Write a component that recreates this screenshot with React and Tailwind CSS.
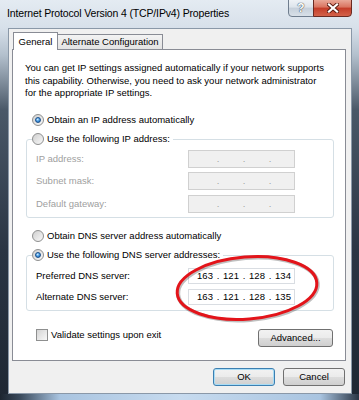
import React from "react";

function Radio({ checked }) {
  return (
    <span className="w-[12px] h-[12px] rounded-full border border-[#8e8f8f] bg-[linear-gradient(135deg,#cfcfcf,#f8f8f8)] flex items-center justify-center shrink-0">
      {checked && (
        <span className="w-[6px] h-[6px] rounded-full border border-[#1b4f8a] bg-[radial-gradient(circle_at_40%_35%,#d6eeff_0%,#4aa0e8_45%,#1e5ea8_100%)]" />
      )}
    </span>
  );
}

function IpBox({ values, disabled, h }) {
  const v = values || ["", "", "", ""];
  return (
    <div
      className={
        "w-[107px] flex items-center pl-[6px] border " +
        h +
        " " +
        (disabled
          ? "bg-[#f0f0f0] border-[#d0d0d0] text-[#a0a0a0]"
          : "bg-white border-[#d9dde2] text-black")
      }
    >
      <span className="w-[20px] text-center">{v[0]}</span>
      <span className="w-[6px] text-center">.</span>
      <span className="w-[20px] text-center">{v[1]}</span>
      <span className="w-[6px] text-center">.</span>
      <span className="w-[20px] text-center">{v[2]}</span>
      <span className="w-[6px] text-center">.</span>
      <span className="w-[20px] text-center">{v[3]}</span>
    </div>
  );
}

const btn =
  "h-[18px] w-[62px] rounded-[3px] border flex items-center justify-center text-black bg-[linear-gradient(to_bottom,#f2f2f2_0%,#ebebeb_50%,#dddddd_50%,#cfcfcf_100%)]";

export default function App() {
  return (
    <div className="relative w-[359px] h-[400px] overflow-hidden font-['Liberation_Sans',Arial,sans-serif] text-[9.5px] leading-[12px] text-black bg-[linear-gradient(to_bottom,#e4ebf2_0px,#d7e0ea_28px,#b3c0cd_55px,#4a5868_110px,#2a3544_250px,#1e2733_400px)] flex flex-col">
      {/* title bar */}
      <div className="h-[28px] flex items-start justify-between pl-[7px] pr-[7px] shrink-0">
        <div className="mt-[6px] text-[10.5px] tracking-[-0.15px] leading-[14px] text-black">
          Internet Protocol Version 4 (TCP/IPv4) Properties
        </div>
        <div className="flex -mt-px">
          <div className="w-[26px] h-[18px] rounded-bl-[4px] border border-[#6f7d8e] bg-[linear-gradient(to_bottom,#eef2f6_0%,#dde4eb_45%,#c5cfda_50%,#d8e0e8_100%)] flex items-center justify-center text-[12px] font-bold text-white [text-shadow:0_0_1px_#2c3845,0_0_1px_#2c3845]">
            ?
          </div>
          <div className="w-[39px] h-[18px] -ml-px rounded-br-[4px] border border-[#6a2a22] bg-[linear-gradient(to_bottom,#e9a898_0%,#d9735f_45%,#c43c28_50%,#d3624a_100%)] flex items-center justify-center">
            <svg width="12" height="10" viewBox="0 0 12 10">
              <path d="M2 1.5 L10 8.5 M10 1.5 L2 8.5" stroke="#5a1c12" strokeWidth="4" strokeLinecap="square" />
              <path d="M2 1.5 L10 8.5 M10 1.5 L2 8.5" stroke="#ffffff" strokeWidth="2.2" strokeLinecap="square" />
            </svg>
          </div>
        </div>
      </div>

      {/* client area */}
      <div className="flex-1 ml-[8px] mr-[7px] border border-[#8a98a8] bg-[#f0f0f0] flex flex-col pt-[3px] pl-[3px] pr-[5px]">
        {/* tabs */}
        <div className="flex items-end h-[18px] -mb-px shrink-0">
          <div className="relative z-10 ml-[1px] w-[45px] h-[18px] border border-b-0 border-[#898c95] bg-white flex items-center justify-center">
            General
          </div>
          <div className="-ml-px w-[106px] h-[16px] border border-[#898c95] bg-[linear-gradient(to_bottom,#f3f3f3,#e3e3e3)] flex items-center justify-center">
            Alternate Configuration
          </div>
        </div>

        {/* panel */}
        <div className="flex-1 border border-[#898c95] bg-white pt-[12px] pl-[12px] pr-[11px] flex flex-col">
          <p className="leading-[12.5px] whitespace-nowrap">
            You can get IP settings assigned automatically if your network supports
            <br />
            this capability. Otherwise, you need to ask your network administrator
            <br />
            for the appropriate IP settings.
          </p>

          <div className="mt-[14px] ml-[7px] h-[13px] flex items-center gap-[3px]">
            <Radio checked />
            <span>Obtain an IP address automatically</span>
          </div>

          <div className="mt-[12px] ml-[1px] border border-[#d5dfe5] rounded-[3px]">
            <div className="-mt-[7px] ml-[5px] pr-[3px] h-[13px] w-fit bg-white flex items-center gap-[3px]">
              <Radio />
              <span>Use the following IP address:</span>
            </div>
            <div className="mt-[4px] pb-[4px] pl-[9px] flex flex-col gap-[4.5px] text-[#a0a0a0]">
              <div className="flex items-center h-[18px]">
                <span className="w-[152px]">IP address:</span>
                <IpBox disabled h="h-[18px]" />
              </div>
              <div className="flex items-center h-[18px]">
                <span className="w-[152px]">Subnet mask:</span>
                <IpBox disabled h="h-[18px]" />
              </div>
              <div className="flex items-center h-[18px]">
                <span className="w-[152px]">Default gateway:</span>
                <IpBox disabled h="h-[18px]" />
              </div>
            </div>
          </div>

          <div className="mt-[12px] ml-[7px] h-[13px] flex items-center gap-[3px]">
            <Radio />
            <span>Obtain DNS server address automatically</span>
          </div>

          <div className="mt-[12px] ml-[1px] border border-[#d5dfe5] rounded-[3px]">
            <div className="-mt-[7px] ml-[5px] pr-[3px] h-[13px] w-fit bg-white flex items-center gap-[3px]">
              <Radio checked />
              <span>Use the following DNS server addresses:</span>
            </div>
            <div className="mt-[6px] pb-[5px] pl-[9px] flex flex-col gap-[5px]">
              <div className="flex items-center h-[16px]">
                <span className="w-[152px]">Preferred DNS server:</span>
                <IpBox values={["163", "121", "128", "134"]} h="h-[16px]" />
              </div>
              <div className="flex items-center h-[16px]">
                <span className="w-[152px]">Alternate DNS server:</span>
                <IpBox values={["163", "121", "128", "135"]} h="h-[16px]" />
              </div>
            </div>
          </div>

          <div className="mt-[18px] flex items-start justify-between">
            <div className="ml-[11px] h-[12px] flex items-center gap-[3px]">
              <span className="w-[12px] h-[12px] border border-[#8e8f8f] bg-[linear-gradient(135deg,#d4d4d4,#f8f8f8)] shrink-0" />
              <span>Validate settings upon exit</span>
            </div>
            <div className={btn + " w-[75px] h-[17px] mr-[1px] border-[#707070]"}>Advanced...</div>
          </div>
        </div>

        {/* bottom buttons */}
        <div className="mt-[7px] mb-[7px] flex justify-end gap-[8px] pr-[1px] shrink-0">
          <div className={btn + " border-[#3c7fb1] shadow-[inset_0_0_0_1px_#a8dcf5]"}>OK</div>
          <div className={btn + " border-[#707070]"}>Cancel</div>
        </div>
      </div>

      {/* bottom frame */}
      <div className="h-[6px] shrink-0 bg-[linear-gradient(to_right,#1c2530_0px,#3a4a5c_20px,#a9c4e0_60px,#c7dbef_180px,#a9c4e0_320px,#2a3544_359px)]" />

      {/* red ellipse annotation */}
      <svg
        className="absolute left-0 top-0 pointer-events-none"
        width="359"
        height="400"
        viewBox="0 0 359 400"
      >
        <ellipse cx="248" cy="289" rx="70" ry="31" transform="rotate(-4.5 248 289)" fill="none" stroke="rgba(0,0,0,0.25)" strokeWidth="4" />
        <ellipse cx="247" cy="288" rx="70" ry="31" transform="rotate(-4.5 247 288)" fill="none" stroke="#e3141a" strokeWidth="3" />
      </svg>
    </div>
  );
}
